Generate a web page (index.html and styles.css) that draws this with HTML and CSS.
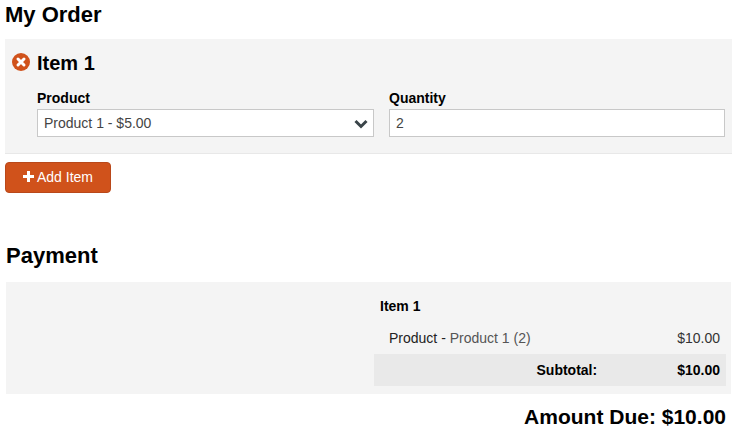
FILE: index.html
```html
<!DOCTYPE html>
<html lang="en">
<head>
    <meta charset="UTF-8">
    <title>My Order</title>
    <link rel="stylesheet" href="styles.css">
</head>
<body>

    <section class="order">
        <h2 class="order-title">My Order</h2>
        <div class="order-item">
            <div class="item-head">
                <svg class="remove-icon" viewBox="0 0 18 18" width="18" height="18" aria-hidden="true">
                    <circle cx="9" cy="9" r="9" fill="#d0521b"/>
                    <path d="M6 6l6 6M12 6l-6 6" stroke="#fff" stroke-width="3" stroke-linecap="round"/>
                </svg>
                <h3>Item 1</h3>
            </div>
            <div class="item-fields">
                <div class="field">
                    <label for="product">Product</label>
                    <div class="select-wrap">
                        <select id="product">
                            <option>Product 1 - $5.00</option>
                        </select>
                        <svg class="chevron" viewBox="0 0 14 10" width="14" height="10" aria-hidden="true">
                            <path d="M1.5 2l5.5 5.5L12.5 2" fill="none" stroke="#3a4449" stroke-width="3"/>
                        </svg>
                    </div>
                </div>
                <div class="field">
                    <label for="quantity">Quantity</label>
                    <input type="text" id="quantity" value="2">
                </div>
            </div>
        </div>
        <button type="button" class="add-button">
            <svg viewBox="0 0 11 11" width="11" height="11" aria-hidden="true">
                <path d="M4 0h3v4h4v3H7v4H4V7H0V4h4z" fill="#fff"/>
            </svg>
            <span>Add Item</span>
        </button>
    </section>

    <section class="payment">
        <h2 class="payment-title">Payment</h2>
        <div class="payment-panel">
            <div class="summary">
                <div class="summary-title">Item 1</div>
                <div class="summary-line">
                    <span>Product - <span class="muted">Product 1 (2)</span></span>
                    <span class="price">$10.00</span>
                </div>
                <div class="summary-total">
                    <span class="total-label">Subtotal:</span>
                    <span class="total-value">$10.00</span>
                </div>
            </div>
        </div>
        <div class="amount-due">Amount Due: $10.00</div>
    </section>

</body>
</html>
```

FILE: styles.css
```css
body {
    font-family: "Liberation Sans", Arial, sans-serif;
    font-size: 14px;
    color: #000;
    background-color: #fff;
    margin: 0;
    padding: 0 5px;
    overflow: hidden;
}
h2, h3 {
    margin: 0;
}
.order-title {
    font-size: 22px;
    line-height: 28px;
    height: 38px;
    padding-top: 1px;
}
.order-item {
    background-color: #f4f4f4;
    border-bottom: 1px solid #e8e8e8;
    height: 114px;
    padding: 0 7px;
}
.item-head {
    display: flex;
    align-items: center;
    gap: 7px;
    height: 47px;
}
.remove-icon {
    flex: none;
    margin-bottom: 1px;
}
.item-head h3 {
    font-size: 20px;
    padding-top: 1px;
}
.item-fields {
    display: grid;
    grid-template-columns: 337px 336px;
    gap: 15px;
    margin-left: 25px;
}
.field label {
    display: block;
    font-weight: bold;
    line-height: 16px;
    margin-top: 4px;
    margin-bottom: 3px;
}
.select-wrap {
    position: relative;
}
.chevron {
    position: absolute;
    right: 6px;
    top: 10px;
}
select, input {
    display: block;
    width: 100%;
    height: 28px;
    box-sizing: border-box;
    border: 1px solid #c8c8c8;
    border-radius: 0;
    background: #fff;
    color: #444;
    font-family: inherit;
    font-size: 14px;
    padding: 0 6px;
    margin: 0;
    appearance: none;
    outline: none;
}
.add-button {
    display: flex;
    align-items: center;
    gap: 2px;
    width: 106px;
    height: 31px;
    margin-top: 8px;
    padding: 0 0 2px 17px;
    background-color: #d0521b;
    border: 1px solid #b9481a;
    border-radius: 4px;
    color: #fff;
    font-family: inherit;
    font-size: 14px;
}
.add-button span {
    margin-left: 1px;
}
.payment {
    margin: 46px 1px 0;
}
.payment-title {
    font-size: 22px;
    line-height: 28px;
    height: 40px;
    padding-top: 3px;
}
.payment-panel {
    background-color: #f4f4f4;
    height: 112px;
    display: flex;
    justify-content: flex-end;
    padding-right: 5px;
}
.summary {
    width: 352px;
}
.summary-title {
    font-weight: bold;
    line-height: 16px;
    padding: 16px 6px 0;
}
.summary-line {
    display: flex;
    justify-content: space-between;
    line-height: 16px;
    padding: 0 6px 0 15px;
    margin-top: 16px;
    color: #222;
}
.muted {
    color: #555;
}
.price {
    color: #333;
}
.summary-total {
    display: flex;
    justify-content: flex-end;
    align-items: center;
    height: 32px;
    margin-top: 8px;
    background-color: #e9e9e9;
    font-weight: bold;
    padding-right: 6px;
}
.total-value {
    margin-left: 80px;
}
.amount-due {
    font-size: 21px;
    font-weight: bold;
    line-height: 24px;
    text-align: right;
    margin-top: 11px;
    padding-right: 5px;
}
```
